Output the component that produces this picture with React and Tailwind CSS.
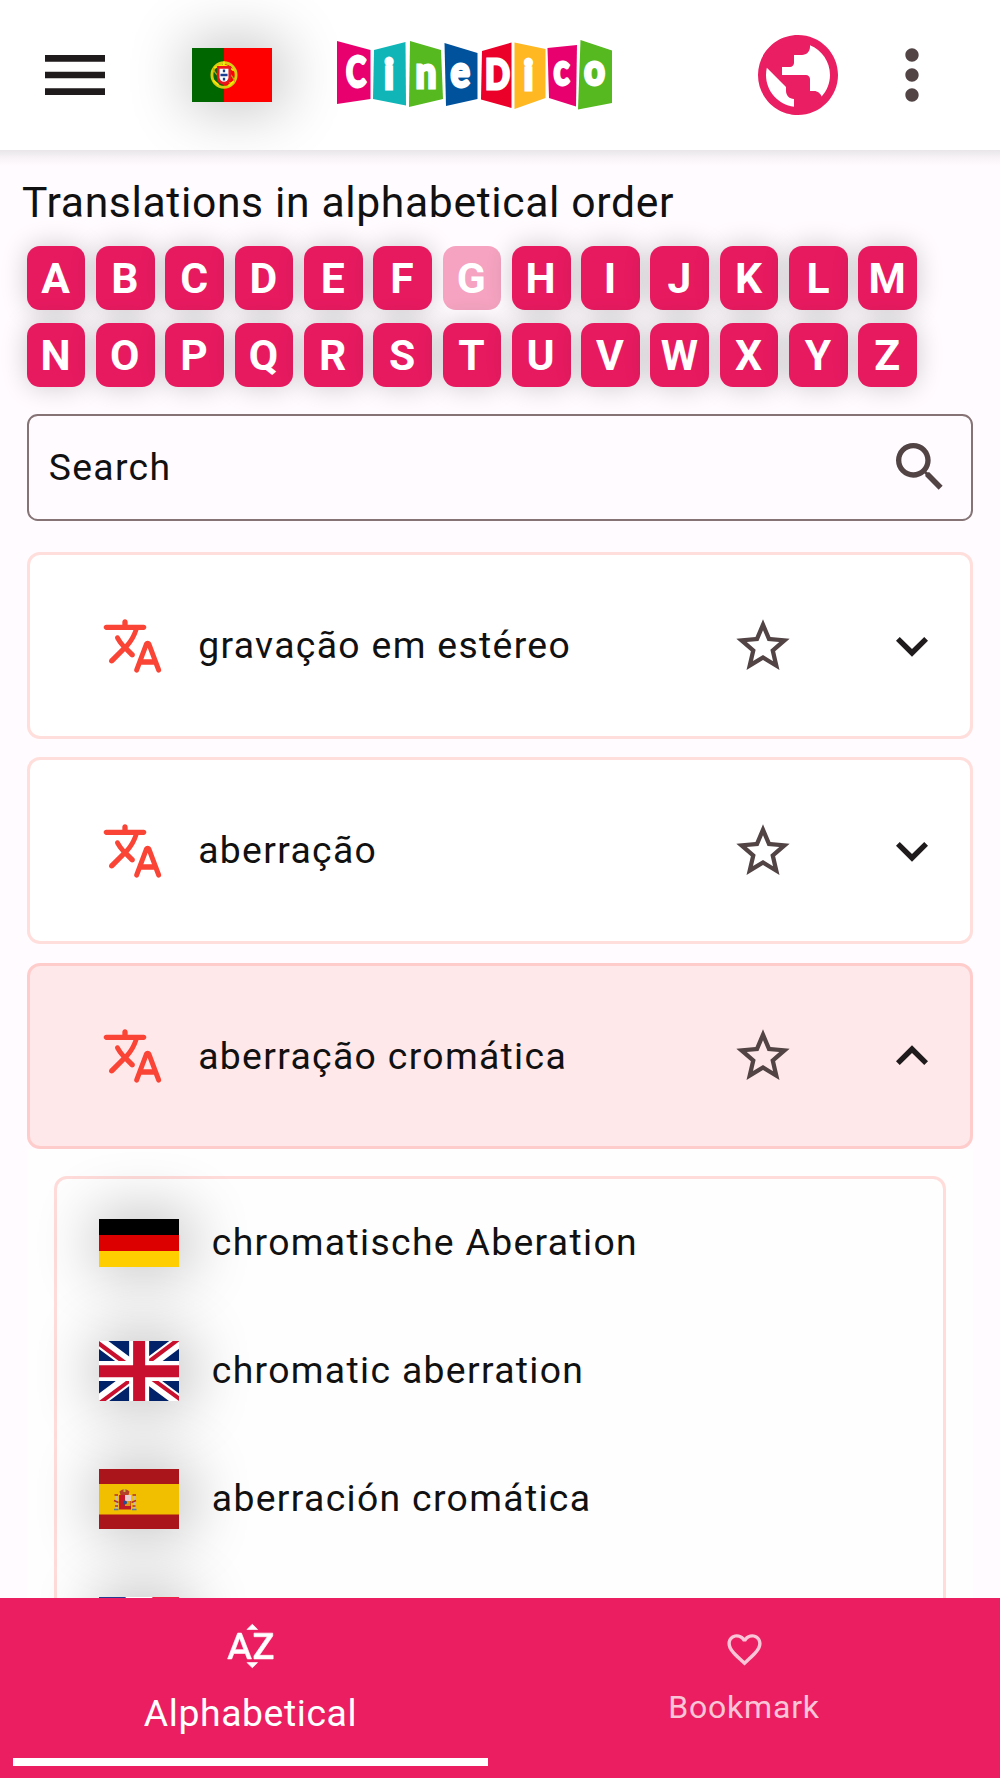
import React from "react";
import {
  MdMenu,
  MdPublic,
  MdMoreVert,
  MdSearch,
  MdStarBorder,
  MdExpandMore,
  MdExpandLess,
  MdFavoriteBorder,
} from "react-icons/md";

const LOGO = [
  { ch: "C", fill: "#e8006f", pts: "17,21 50.5,30 50.5,79 17,84", x: 26, y: 67, size: 42, w: 20 },
  { ch: "i", fill: "#10b5b8", pts: "54,30 85.5,22 86,85.5 53,79", x: 64, y: 68.5, size: 42, w: 10 },
  { ch: "n", fill: "#55b91f", pts: "90,21 121,30 123,79 89,87", x: 95.5, y: 67.5, size: 43, w: 21 },
  { ch: "e", fill: "#00529c", pts: "124.5,23 157.5,33 157.5,79 126,86", x: 130.5, y: 67, size: 43, w: 19.5 },
  { ch: "D", fill: "#ea0029", pts: "162,31 191.5,22.5 191.5,88 161,79.5", x: 165, y: 69, size: 41, w: 25 },
  { ch: "i", fill: "#ffb722", pts: "194.5,22.5 225.5,29 225.5,78 194.5,89", x: 203.5, y: 69.5, size: 42, w: 10 },
  { ch: "c", fill: "#e8006f", pts: "227.5,28 257,25 256,86.5 229,78", x: 233.5, y: 64.5, size: 43, w: 16 },
  { ch: "o", fill: "#55b91f", pts: "260.5,20 292,30.5 292,83 258,89.5", x: 264, y: 64.5, size: 43, w: 21 },
];

function Logo() {
  return (
    <svg className="ml-[48px] h-[110px] w-[310px] shrink-0" viewBox="0 0 310 110" aria-label="CineDico">
      {LOGO.map((l, i) => (
        <g key={i}>
          <polygon points={l.pts} fill={l.fill} />
          <text
            x={l.x}
            y={l.y}
            fill="#fff"
            stroke="#fff"
            strokeWidth="2.8"
            fontSize={l.size}
            fontWeight="900"
            fontFamily='Lato, "Open Sans", sans-serif'
            textLength={l.w}
            lengthAdjust="spacingAndGlyphs"
          >
            {l.ch}
          </text>
        </g>
      ))}
    </svg>
  );
}

const FLAG = "relative z-10 block w-[80px]";

function Flagged({ children }) {
  return <div className="w-[80px] shrink-0 shadow-[4px_0_60px_8px_rgba(0,0,0,0.23)]">{children}</div>;
}

function FlagPT() {
  return (
    <svg className={`${FLAG} h-[54px]`} viewBox="0 0 90 60" preserveAspectRatio="none">
      <rect width="90" height="60" fill="#f00" />
      <rect width="36" height="60" fill="#060" />
      <circle cx="36" cy="30" r="13.6" fill="none" stroke="#d8cf10" strokeWidth="3.2" />
      <ellipse cx="36" cy="30" rx="13.5" ry="5" fill="none" stroke="#b9a510" strokeWidth="1.4" transform="rotate(35 36 30)" />
      <path d="M25 22l8-3 6 1 8 5M24 36l6 5M47 37l-6 5M36 15v5" stroke="#ffe900" strokeWidth="2" fill="none" />
      <path d="M28 20h16v13a8 8 0 0 1-16 0z" fill="#e8161d" />
      <path d="M31 23h10v9.500a5 5 0 0 1-10 0z" fill="#fff" />
      <path d="M36 24v3M36 28.500v3M36 33v3M32 30h8" stroke="#1c3f94" strokeWidth="2.600" />
    </svg>
  );
}

function FlagDE() {
  return (
    <svg className={`${FLAG} h-[48px]`} viewBox="0 0 5 3" preserveAspectRatio="none">
      <rect width="5" height="3" fill="#000" />
      <rect y="1" width="5" height="2" fill="#d00" />
      <rect y="2" width="5" height="1" fill="#ffce00" />
    </svg>
  );
}

function FlagGB() {
  return (
    <svg className={`${FLAG} h-[60px]`} viewBox="0 0 640 480" preserveAspectRatio="none">
      <path fill="#012169" d="M0 0h640v480H0z" />
      <path
        fill="#FFF"
        d="m75 0 244 181L562 0h78v62L400 241l240 178v61h-80L320 301 81 480H0v-60l239-178L0 64V0h75z"
      />
      <path
        fill="#C8102E"
        d="m424 281 216 159v40L369 281h55zm-184 20 6 35L54 480H0l240-179zM640 0v3L391 191l2-44L590 0h50zM0 0l239 176h-60L0 42V0z"
      />
      <path fill="#FFF" d="M241 0v480h160V0H241zM0 160v160h640V160H0z" />
      <path fill="#C8102E" d="M0 193v96h640v-96H0zM273 0v480h96V0h-96z" />
    </svg>
  );
}

function FlagES() {
  return (
    <svg className={`${FLAG} h-[60px]`} viewBox="0 0 80 60" preserveAspectRatio="none">
      <rect width="80" height="60" fill="#aa151b" />
      <rect y="15" width="80" height="30.500" fill="#f1bf00" />
      <path d="M20.500 22.500l2-1.500 3-1 3 1 2 1.500-1 3.500h-8z" fill="#b5402a" />
      <path d="M24.500 20h2v3h-2z" fill="#c8b43c" />
      <path d="M20 26h6v6h-6z" fill="#c7182a" />
      <path d="M26 26h6v6h-6z" fill="#e7cfd0" />
      <path d="M20 32h12v8.500h-12z" fill="#c01a25" />
      <path d="M26 32h5.500v5h-5.500z" fill="#d99a12" />
      <circle cx="26" cy="33.500" r="2" fill="#1f4f9c" />
      <path d="M17.300 27v13M35 27v13" stroke="#c9b8ae" strokeWidth="2" />
      <path d="M15 31.500l4.500 2M32.500 33.500l4.500-2M15.500 26h3.500M33.500 26h3.500M16 37h3M33.500 37h3" stroke="#b5322a" strokeWidth="1.600" />
      <path d="M15 40.500h4.500M33 40.500h4.500" stroke="#5a7a9a" strokeWidth="1.400" />
    </svg>
  );
}

function FlagFR() {
  return (
    <svg className={`${FLAG} h-[60px]`} viewBox="0 0 3 2" preserveAspectRatio="none">
      <rect width="3" height="2" fill="#fff" />
      <rect width="1" height="2" fill="#273991" />
      <rect x="2" width="1" height="2" fill="#ee2346" />
    </svg>
  );
}

function TranslateIcon() {
  return (
    <svg className="h-[64px] w-[64px] shrink-0 fill-[#f94436]" viewBox="0 0 24 24">
      <path d="M12.65 15.67c.14-.36.05-.77-.23-1.05l-2.09-2.06.03-.03c1.74-1.94 2.98-4.17 3.71-6.53h1.94c.54 0 .99-.45.99-.99v-.02c0-.54-.45-.99-.99-.99H10V3c0-.55-.45-1-1-1s-1 .45-1 1v1H1.99c-.54 0-.99.45-.99.99 0 .55.45.99.99.99h10.18C11.5 7.92 10.44 9.75 9 11.35c-.81-.89-1.49-1.86-2.06-2.88-.16-.29-.45-.47-.78-.47-.69 0-1.13.75-.79 1.35.63 1.13 1.4 2.21 2.3 3.21L3.3 16.87c-.4.39-.4 1.03 0 1.42.39.39 1.02.39 1.42 0L9 14l2.02 2.02c.51.51 1.38.32 1.63-.35zM17.5 10c-.6 0-1.14.37-1.35.94l-3.67 9.8c-.24.61.22 1.26.87 1.26.39 0 .74-.24.88-.61l.89-2.39h4.75l.9 2.39c.14.36.49.61.88.61.65 0 1.11-.65.88-1.26l-3.67-9.8c-.22-.57-.76-.94-1.36-.94zm-1.62 7l1.62-4.33L19.12 17h-3.24z" />
    </svg>
  );
}

function SortAlphaIcon() {
  return (
    <svg
      className="mt-[20.5px] size-[54px] fill-white stroke-white"
      viewBox="0 0 24 24"
      strokeWidth="0.3"
    >
      <path d="M14.94 4.66h-4.72l2.36-2.36zM10.25 19.37h4.66l-2.33 2.33zM6.1 6.27L1.6 17.73h1.84l.92-2.45h5.11l.92 2.45h1.84L7.74 6.27H6.1zM4.97 13.64l1.94-5.18 1.94 5.18H4.97zM15.73 16.14h6.12v1.59h-8.53v-1.29l5.92-8.56h-5.88v-1.6h8.3v1.26L15.73 16.14z" />
    </svg>
  );
}

function LetterRow({ letters, disabled }) {
  return (
    <div className="flex gap-[10.67px]">
      {letters.split("").map((l) => (
        <button
          key={l}
          className={
            "flex h-[64px] w-[58.67px] items-center justify-center rounded-[13px] pt-[1px] pr-[1px] text-[42.67px] leading-none font-bold text-white " +
            (l === disabled
              ? "bg-[#f5a3c0]"
              : "bg-[#e71a60] shadow-[0_0_27px_rgba(0,0,0,0.2)]")
          }
        >
          {l}
        </button>
      ))}
    </div>
  );
}

function TermCard({ term, open }) {
  const Chevron = open ? MdExpandLess : MdExpandMore;
  return (
    <div
      className={
        "flex h-[186.67px] items-center rounded-[13px] border-[3px] pt-[1px] pl-[71px] pr-[26px] " +
        (open ? "border-[#ffcccc] bg-[#ffe8ea]" : "border-[#ffdedb] bg-white")
      }
    >
      <TranslateIcon />
      <span className="ml-[33.5px] grow text-[37.33px] leading-none tracking-[1.33px]">{term}</span>
      <MdStarBorder className="mr-[85.5px] size-[64px] shrink-0 text-[#524345]" />
      <Chevron className="size-[64px] shrink-0 text-[#1f1a1b]" />
    </div>
  );
}

const TRANSLATIONS = [
  { Flag: FlagDE, text: "chromatische Aberation" },
  { Flag: FlagGB, text: "chromatic aberration" },
  { Flag: FlagES, text: "aberración cromática" },
  { Flag: FlagFR, text: "" },
];

export default function App() {
  return (
    <div className="flex h-[1778px] w-[1000px] flex-col overflow-hidden bg-[#fffbff] font-[Roboto,sans-serif] text-[#111]">
      <header className="flex h-[150px] shrink-0 items-center overflow-hidden bg-white">
        <MdMenu className="ml-[35px] size-[80px] shrink-0 text-[#1f1a1b]" />
        <div className="ml-[77px]">
          <Flagged>
            <FlagPT />
          </Flagged>
        </div>
        <Logo />
        <MdPublic className="ml-[119.5px] size-[96px] shrink-0 text-[#ea1e63]" />
        <MdMoreVert className="ml-[26.5px] size-[80px] shrink-0 text-[#524345]" />
      </header>

      <main className="flex min-h-0 grow flex-col overflow-hidden">
        <div className="h-[16px] shrink-0 bg-linear-to-b from-[#e9e6ea] via-[#f7f3f7] to-[#fffbff]" />
        <h1 className="mt-[8px] ml-[22px] h-[56px] shrink-0 text-[42.67px] leading-[56px] font-normal tracking-[0.64px] whitespace-nowrap">
          Translations in alphabetical order
        </h1>

        <nav className="mt-[16px] ml-[26.67px] flex shrink-0 flex-col gap-[13.33px]">
          <LetterRow letters="ABCDEFGHIJKLM" disabled="G" />
          <LetterRow letters="NOPQRSTUVWXYZ" />
        </nav>

        <div className="mx-[26.67px] mt-[26.33px] flex h-[107px] shrink-0 items-center justify-between rounded-[10.67px] border-[2.67px] border-[#857375] bg-[#fffbff] pr-[19px] pl-[20px]">
          <span className="pt-[2px] text-[37.33px] leading-none tracking-[1.33px]">Search</span>
          <MdSearch className="size-[64px] text-[#524345]" />
        </div>

        <section className="mx-[26.67px] mt-[31.3px] flex shrink-0 flex-col gap-[18.67px]">
          <TermCard term="gravação em estéreo" />
          <TermCard term="aberração" />
          <TermCard term="aberração cromática" open />
        </section>

        <div className="mx-[26.67px] shrink-0 bg-[#fefefe] px-[27.33px] pt-[26.67px]">
          <ul className="flex flex-col rounded-t-[13px] border-[3px] border-b-0 border-[#ffdbd9]">
            {TRANSLATIONS.map(({ Flag, text }, i) => (
              <li key={i} className="flex h-[128px] items-center pl-[41.8px]">
                <Flagged>
                  <Flag />
                </Flagged>
                <span className="ml-[33px] text-[37.33px] leading-none tracking-[1.33px]">{text}</span>
              </li>
            ))}
          </ul>
        </div>
      </main>

      <footer className="relative z-10 flex h-[180px] shrink-0 bg-[#eb1e62] px-[13px]">
        <div className="flex w-[475px] flex-col items-center text-white">
          <SortAlphaIcon />
          <span className="mt-[15px] text-[37.33px] leading-[50px] tracking-[0.6px]">Alphabetical</span>
          <span className="mt-[20px] h-[8.33px] w-full bg-white" />
        </div>
        <div className="ml-[24px] flex w-[464px] flex-col items-center text-white/75">
          <MdFavoriteBorder className="mt-[31px] size-[41px]" />
          <span className="mt-[17px] text-[32px] leading-[40px] tracking-[0.8px]">Bookmark</span>
        </div>
      </footer>
    </div>
  );
}
